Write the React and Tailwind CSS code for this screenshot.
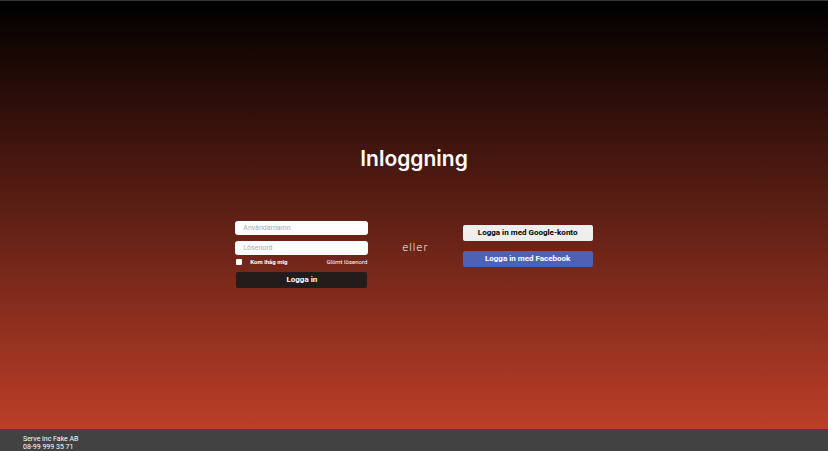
export default function App() {
  return (
    <div className="flex min-h-screen flex-col border-t border-[#333436] bg-[#424242] font-['Roboto',Arial,sans-serif] text-white">
      <main className="flex-1 bg-linear-to-b/srgb from-black to-[#bc3f29] pt-36">
        <h1 className="text-center font-['Inter',sans-serif] text-[21px] leading-7 font-semibold">
          Inloggning
        </h1>
        <div className="mt-12 flex items-start justify-center gap-[34px]">
          <form className="w-[133px]" onSubmit={(e) => e.preventDefault()}>
            <input
              type="text"
              aria-label="Användarnamn"
              placeholder="Användarnamn"
              className="block h-3.5 w-full rounded-[3px] bg-white px-2 text-[7px] text-black placeholder:text-[#aaa]"
            />
            <input
              type="password"
              aria-label="Lösenord"
              placeholder="Lösenord"
              className="mt-1.5 block h-3.5 w-full rounded-[3px] bg-white px-2 text-[7px] text-black placeholder:text-[#aaa]"
            />
            <div className="flex h-[17px] items-center justify-between px-px pb-[3px] text-[6px] leading-none">
              <label className="flex items-center gap-2 font-bold">
                <input
                  type="checkbox"
                  className="size-1.5 appearance-none rounded-[1px] bg-white checked:bg-[#4f61b5]"
                />
                Kom ihåg mig
              </label>
              <a href="#glomt">Glömt lösenord</a>
            </div>
            <div className="px-px">
              <button
                type="submit"
                className="block h-4 w-full rounded-[2px] bg-[#231c1a] text-[8px] leading-4 font-bold"
              >
                Logga in
              </button>
            </div>
          </form>
          <p className="pt-4 font-['Open_Sans',sans-serif] text-[11px] leading-5 font-light tracking-[1px]">
            eller
          </p>
          <div className="flex w-[130px] flex-col gap-2.5 pt-1">
            <button
              type="button"
              className="h-4 rounded-[2px] bg-[#eeeeee] text-[8px] leading-4 font-bold text-black"
            >
              Logga in med Google-konto
            </button>
            <button
              type="button"
              className="h-4 rounded-[2px] bg-[#4f61b5] text-[8px] leading-4 font-bold"
            >
              Logga in med Facebook
            </button>
          </div>
        </div>
      </main>
      <footer className="h-[22px] px-[23px] pt-1.5 text-[7px] leading-2">
        <p>Serve inc Fake AB</p>
        <p>08-99 999 35 71</p>
      </footer>
    </div>
  );
}
